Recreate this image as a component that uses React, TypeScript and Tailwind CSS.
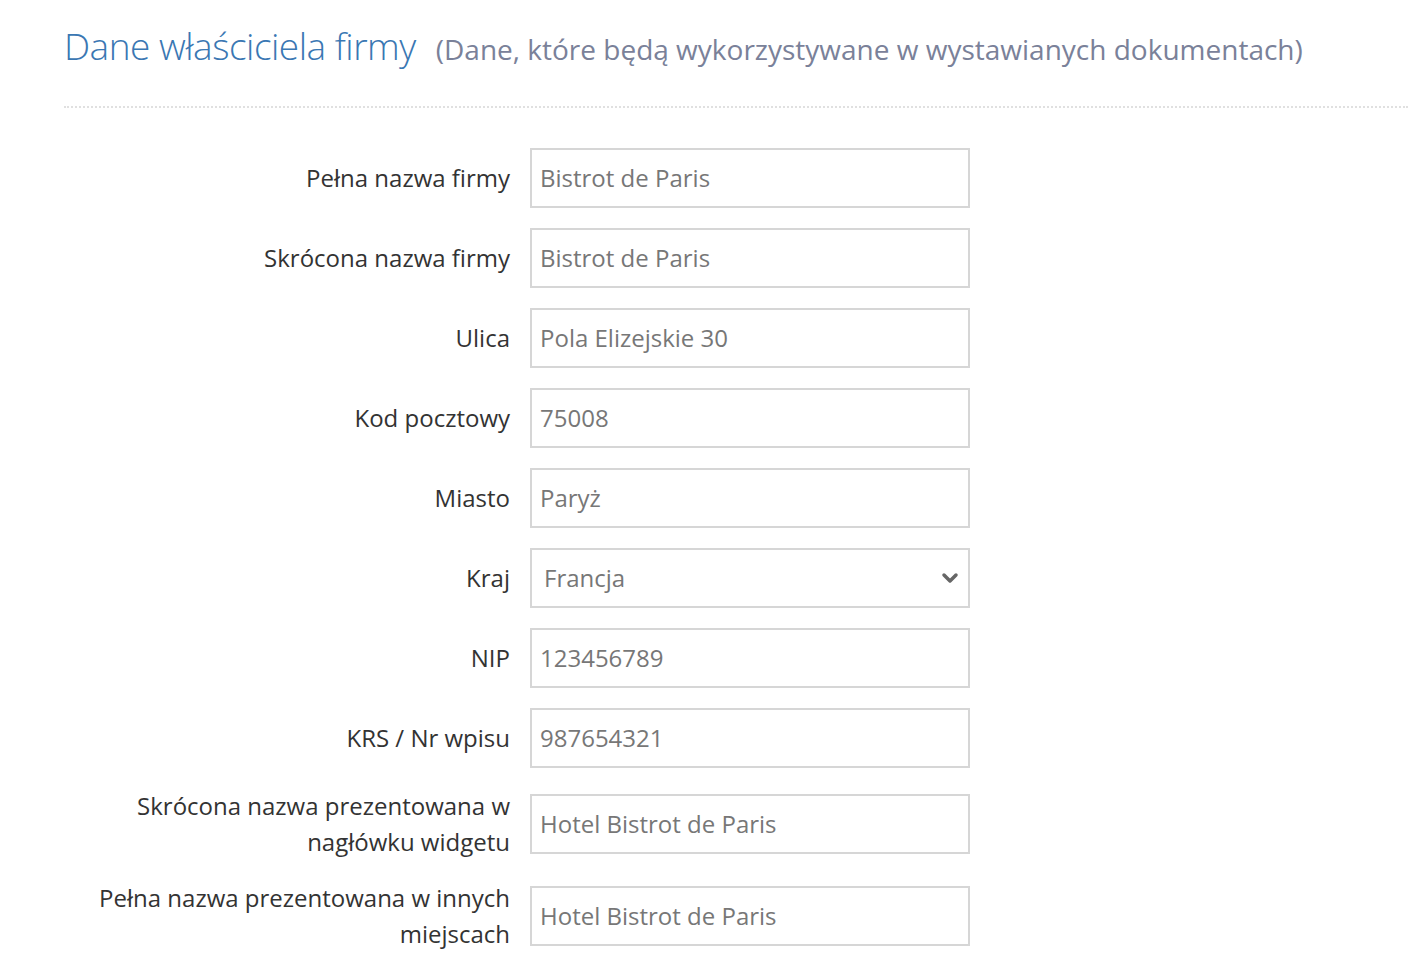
import { ChevronDown } from "lucide-react";

const rows: { label: string[]; value: string; select?: boolean }[] = [
  { label: ["Pełna nazwa firmy"], value: "Bistrot de Paris" },
  { label: ["Skrócona nazwa firmy"], value: "Bistrot de Paris" },
  { label: ["Ulica"], value: "Pola Elizejskie 30" },
  { label: ["Kod pocztowy"], value: "75008" },
  { label: ["Miasto"], value: "Paryż" },
  { label: ["Kraj"], value: "Francja", select: true },
  { label: ["NIP"], value: "123456789" },
  { label: ["KRS / Nr wpisu"], value: "987654321" },
  { label: ["Skrócona nazwa prezentowana w", "nagłówku widgetu"], value: "Hotel Bistrot de Paris" },
  { label: ["Pełna nazwa prezentowana w innych", "miejscach"], value: "Hotel Bistrot de Paris" },
];

export default function App() {
  return (
    <div className="min-h-screen bg-white font-['Open_Sans',sans-serif]">
      <div className="pl-[64px] pt-[22px]">
        <div className="flex items-baseline">
          <h1 className="text-[37px] font-light text-[#3a77b3] tracking-[-0.5px] leading-[48px]">
            Dane właściciela firmy
          </h1>
          <span className="ml-[20px] text-[28px] text-[#7a8199]">
            (Dane, które będą wykorzystywane w wystawianych dokumentach)
          </span>
        </div>
        <div className="mt-[36px] border-t-2 border-dotted border-[#e0e0e0]" />

        <div className="mt-[40px] flex flex-col gap-[20px]">
          {rows.map((r, i) => (
            <div key={i} className="flex items-center">
              <div className="w-[446px] text-right text-[24px] leading-[36px] text-[#333]">
                {r.label.map((l, j) => (
                  <div key={j}>{l}</div>
                ))}
              </div>
              <div className="ml-[20px] w-[440px] h-[60px] border-2 border-[#d6d6d6] flex items-center justify-between">
                <span className={`text-[24px] text-[#777] ${r.select ? "pl-[12px]" : "pl-[8px]"}`}>
                  {r.value}
                </span>
                {r.select && (
                  <ChevronDown className="mr-[6px] w-[24px] h-[24px] text-[#666]" strokeWidth={3.5} />
                )}
              </div>
            </div>
          ))}
        </div>
      </div>
    </div>
  );
}
